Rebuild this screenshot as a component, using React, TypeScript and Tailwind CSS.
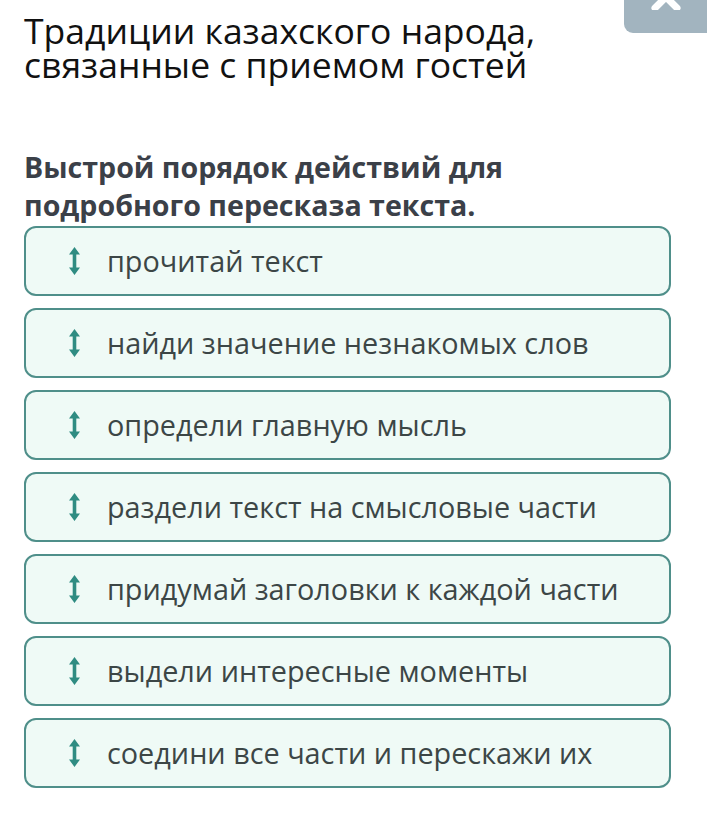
import React from "react";

const steps = [
  "прочитай текст",
  "найди значение незнакомых слов",
  "определи главную мысль",
  "раздели текст на смысловые части",
  "придумай заголовки к каждой части",
  "выдели интересные моменты",
  "соедини все части и перескажи их",
];

function DragIcon() {
  return (
    <svg width="11" height="28" viewBox="0 0 11 28" className="shrink-0">
      <path d="M5.5 0 L11 7.5 L7.3 7.5 L7.3 20.5 L11 20.5 L5.5 28 L0 20.5 L3.7 20.5 L3.7 7.5 L0 7.5 Z" fill="#2f8c82" />
    </svg>
  );
}

export default function App() {
  return (
    <main className="relative min-h-[818px] w-[707px] bg-white font-['Open_Sans',sans-serif]">
      <div className="absolute right-0 top-0 flex h-[33px] w-[83px] justify-center overflow-hidden rounded-bl-[9px] bg-[#a2b4bf]">
        <svg width="40" height="10" viewBox="0 0 40 10">
          <path d="M9 -14 L31 8 M31 -14 L9 8" stroke="white" strokeWidth="7" strokeLinecap="round" fill="none" />
        </svg>
      </div>

      <div className="px-[24px] pt-[13px]">
        <h1 className="text-[35.5px] leading-[34px] text-[#111]">
          Традиции казахского народа,
          <br />
          связанные с приемом гостей
        </h1>

        <h2 className="mt-[67px] text-[28.6px] font-bold leading-[38px] text-[#3b4048]">
          Выстрой порядок действий для
          <br />
          подробного пересказа текста.
        </h2>

        <div className="mt-[2px] flex w-[647px] flex-col gap-[12px]">
          {steps.map((s) => (
            <div
              key={s}
              className="flex h-[70px] items-center gap-[27px] rounded-[12px] border-2 border-[#4f8f8a] bg-[#effaf6] pl-[43px]"
            >
              <DragIcon />
              <span className="text-[28.8px] text-[#3c4646]">{s}</span>
            </div>
          ))}
        </div>
      </div>
    </main>
  );
}
